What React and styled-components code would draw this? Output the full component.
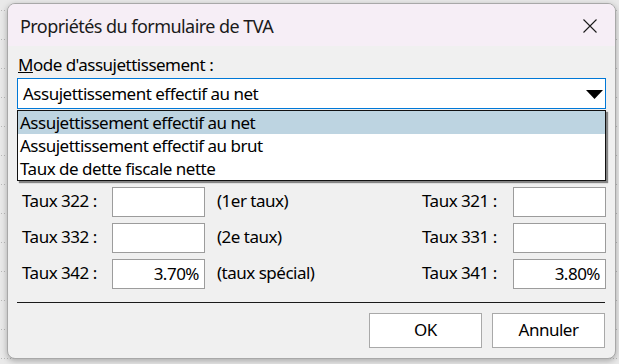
import React from 'react'
import styled, { createGlobalStyle } from 'styled-components'

const Global = createGlobalStyle`
  html, body {
    margin: 0;
    padding: 0;
  }
  body {
    width: 619px;
    height: 364px;
    overflow: hidden;
    background-color: #e9e9e9;
    background-image: radial-gradient(circle, #b9b9b9 0.7px, transparent 0.9px);
    background-size: 3px 29px;
    background-position: 0 -4px;
    font-family: "Noto Sans", "Liberation Sans", Arial, sans-serif;
  }
`

const Window = styled.div`
  margin: 3px 0 0 7px;
  width: 609px;
  height: 356px;
  box-sizing: border-box;
  border-radius: 8px;
  overflow: hidden;
  background: #f0f0f0;
  border: 1px solid #a8a8a8;
  box-shadow: 0 2px 6px rgba(0, 0, 0, 0.28);
  display: flex;
  flex-direction: column;
`

const TitleBar = styled.div`
  height: 42px;
  flex: none;
  display: flex;
  align-items: center;
  justify-content: space-between;
  padding: 0 17px 0 12px;
  background: #f6eef6;
`

const Title = styled.div`
  font-size: 18px;
  letter-spacing: -0.55px;
  color: #1b1b1b;
  margin-top: 1px;
  white-space: nowrap;
`

const CloseBtn = styled.div`
  width: 16px;
  height: 16px;
  display: flex;
  margin-top: 1px;
`

const Body = styled.div`
  padding: 8px 9px 0 9px;
  display: flex;
  flex-direction: column;
  font-size: 17px;
  letter-spacing: -0.5px;
  line-height: 22px;
  color: #000;
  white-space: nowrap;
`

const Label = styled.div`
  padding-left: 1px;
  height: 22px;
`

const ComboWrap = styled.div`
  position: relative;
  margin-top: 2px;
`

const Combo = styled.div`
  height: 31px;
  box-sizing: border-box;
  border: 1px solid #0078d7;
  background: #fff;
  display: flex;
  align-items: center;
  justify-content: space-between;
  padding: 0 2px 0 5px;
`

const Arrow = styled.svg`
  width: 17px;
  height: 9px;
  margin-top: 2px;
`

const List = styled.div`
  position: absolute;
  top: 100%;
  left: 0;
  right: 0;
  margin-top: 1px;
  background: #fff;
  border: 1px solid #111;
  box-shadow: 2px 2px 1px rgba(0, 0, 0, 0.45);
  z-index: 2;
`

const Item = styled.div`
  height: 23px;
  line-height: 23px;
  padding-left: 2px;
  background: ${p => (p.$active ? '#bdd4e1' : '#fff')};
`

const Rows = styled.div`
  margin-top: 6px;
  display: flex;
  flex-direction: column;
  gap: 6px;
`

const Row = styled.div`
  display: grid;
  grid-template-columns: 95px 93px 217px 91px 93px;
  align-items: center;
  height: 30px;
`

const RowLabel = styled.div`
  padding-left: ${p => p.$pad || 0}px;
  margin-top: -2px;
`

const Note = styled.div`
  padding-left: 12px;
  margin-top: -2px;
`

const Field = styled.div`
  height: 30px;
  box-sizing: border-box;
  border: 1px solid #9c9c9c;
  background: #fff;
  text-align: right;
  padding: 3px 5px 0 0;
`

const Separator = styled.div`
  margin: 13px 1px 0 0;
  height: 1px;
  background: #1a1a1a;
`

const Buttons = styled.div`
  margin-top: 10px;
  display: flex;
  justify-content: flex-end;
  gap: 10px;
  padding-right: 1px;
`

const Button = styled.div`
  width: 113px;
  height: 35px;
  box-sizing: border-box;
  border: 1px solid #a9a9a9;
  background: #fff;
  display: flex;
  align-items: center;
  justify-content: center;
  padding-bottom: 2px;
`

// the first two rows sit under the open list, so their texts are not drawn
const rows = [
  { l: '', v: '', n: '', rl: '', rv: '' },
  { l: '', v: '', n: '', rl: '', rv: '' },
  { l: 'Taux 322 :', v: '', n: '(1er taux)', rl: 'Taux 321 :', rv: '' },
  { l: 'Taux 332 :', v: '', n: '(2e taux)', rl: 'Taux 331 :', rv: '' },
  { l: 'Taux 342 :', v: '3.70%', n: '(taux spécial)', rl: 'Taux 341 :', rv: '3.80%' },
]

export default function App() {
  return (
    <>
      <Global />
      <Window>
        <TitleBar>
          <Title>Propriétés du formulaire de TVA</Title>
          <CloseBtn>
            <svg width="16" height="16" viewBox="0 0 16 16">
              <path d="M1.5 1.5 L14.5 14.5 M14.5 1.5 L1.5 14.5" stroke="#1b1b1b" strokeWidth="1.1" fill="none" />
            </svg>
          </CloseBtn>
        </TitleBar>
        <Body>
          <Label><u>M</u>ode d'assujettissement :</Label>
          <ComboWrap>
            <Combo>
              <span>Assujettissement effectif au net</span>
              <Arrow viewBox="0 0 17 9">
                <path d="M0 0 H17 L8.5 9 Z" fill="#000" />
              </Arrow>
            </Combo>
            <List>
              <Item $active>Assujettissement effectif au net</Item>
              <Item>Assujettissement effectif au brut</Item>
              <Item>Taux de dette fiscale nette</Item>
            </List>
          </ComboWrap>
          <Rows>
            {rows.map((r, i) => (
              <Row key={i}>
                <RowLabel $pad={5}>{r.l}</RowLabel>
                <Field>{r.v}</Field>
                <Note>{r.n}</Note>
                <RowLabel>{r.rl}</RowLabel>
                <Field>{r.rv}</Field>
              </Row>
            ))}
          </Rows>
          <Separator />
          <Buttons>
            <Button>OK</Button>
            <Button>Annuler</Button>
          </Buttons>
        </Body>
      </Window>
    </>
  )
}
